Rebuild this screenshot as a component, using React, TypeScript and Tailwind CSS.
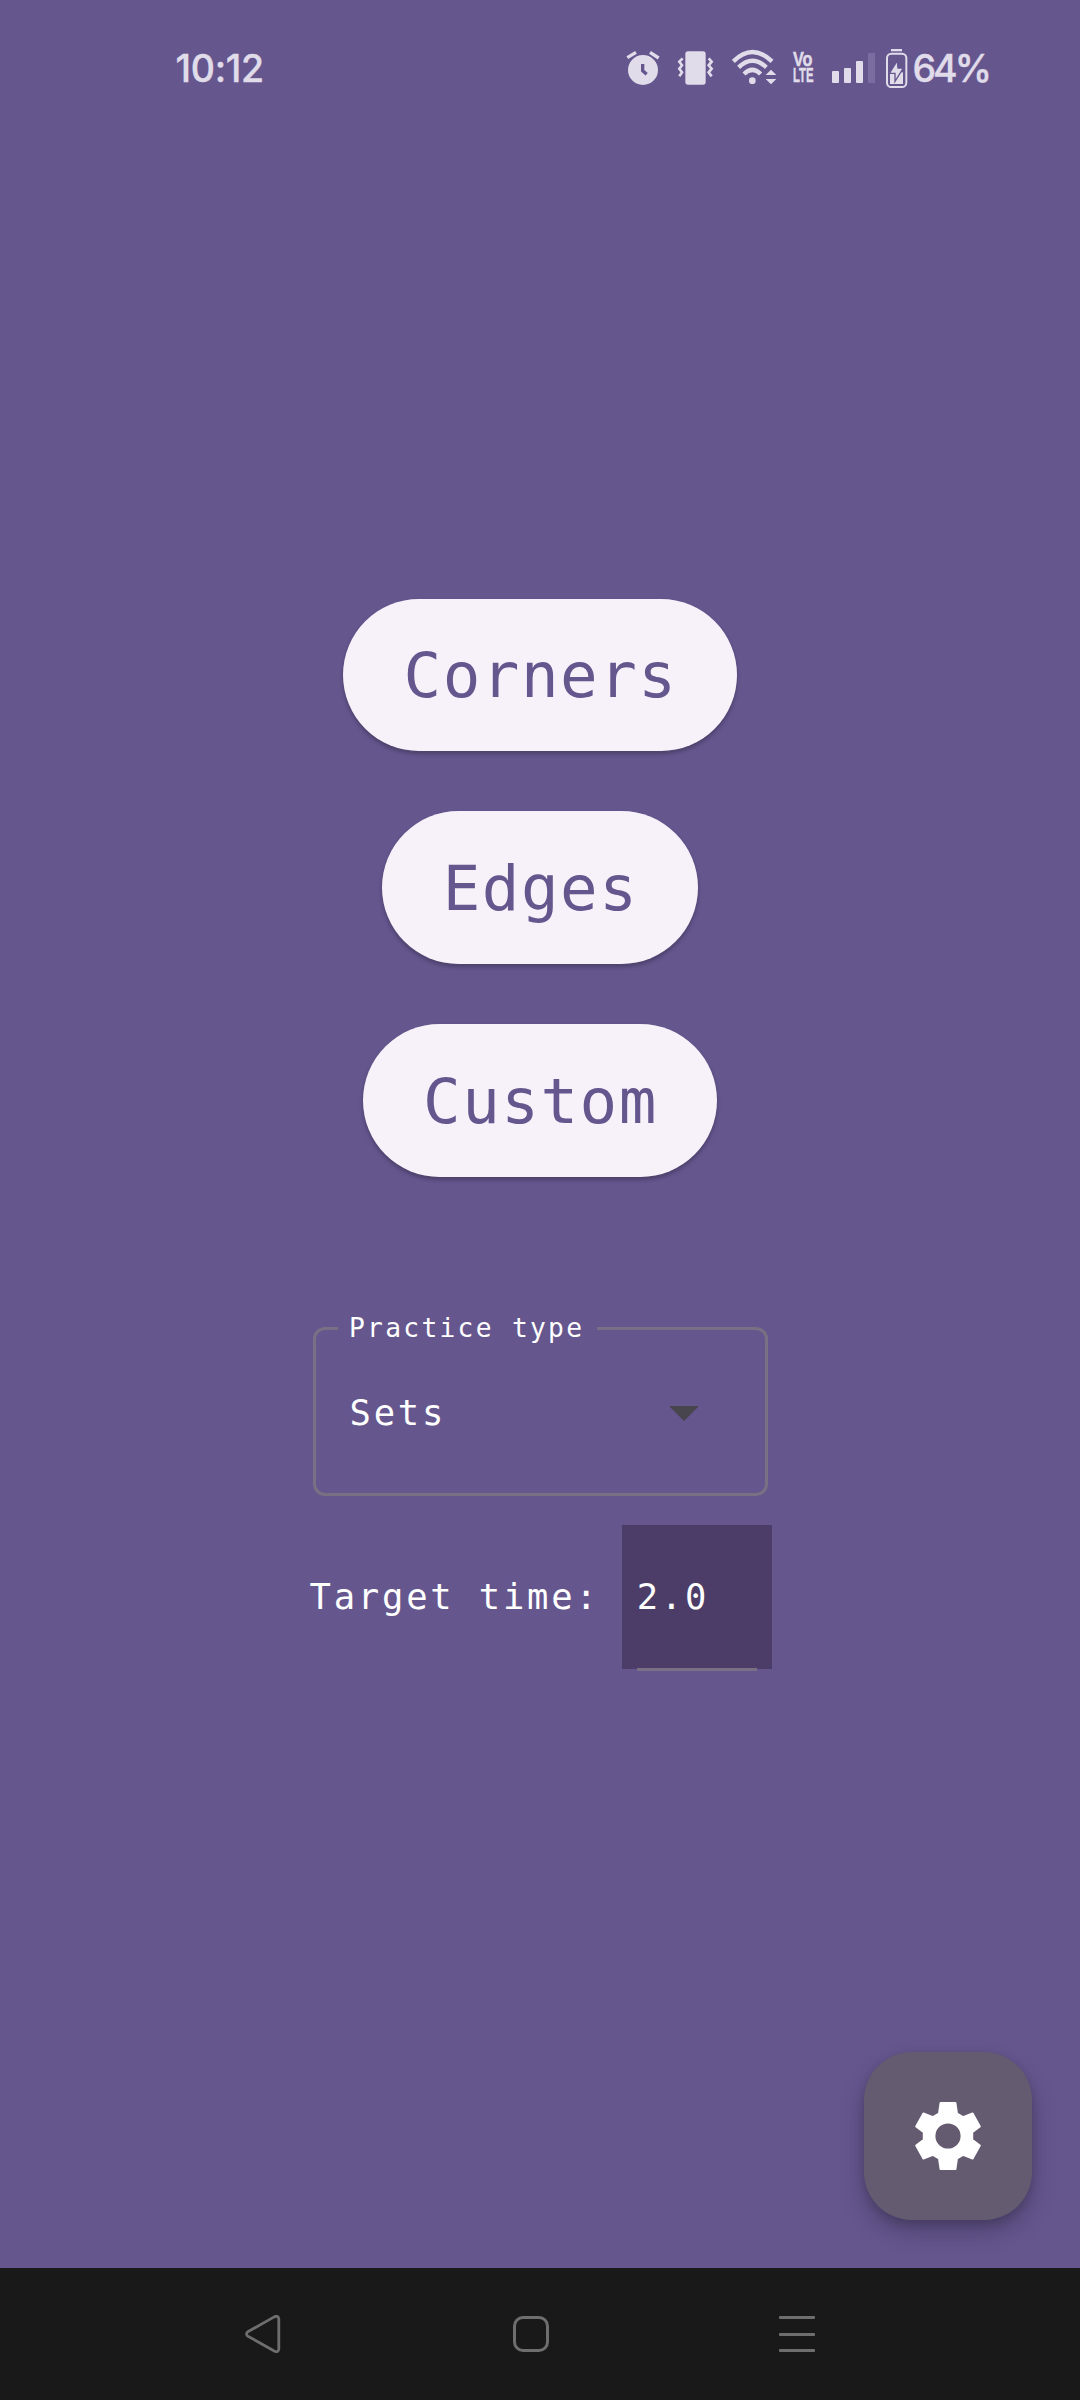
import React from "react";

const INK = "#e0dcea";
const BG = "#65568e";
const MONO = "font-['DejaVu_Sans_Mono','Liberation_Mono',monospace]";

function StatusIcon({ x, w, children }: { x: number; w: number; children: React.ReactNode }) {
  return (
    <svg width={w} height={44} viewBox={`${x} 48 ${w * 3} 132`} fill={INK} className="shrink-0">
      {children}
    </svg>
  );
}

function StatusBar() {
  return (
    <header className="flex h-[136px] items-center pl-[175.5px] font-['Inter',sans-serif] text-[37.5px] font-medium leading-[44px] text-[#e0dcea]">
      <div className="w-[450.5px] pt-[2px] tracking-[-0.3px] [-webkit-text-stroke:0.4px_#e0dcea]">10:12</div>
      <StatusIcon x={48} w={34}>
        <circle cx="99" cy="120" r="45" />
        <path d="M52 83 78 67M120 67l26 17" stroke={INK} strokeWidth="10" />
        <path d="M98 102v20l12 11" fill="none" stroke={BG} strokeWidth="10" />
      </StatusIcon>
      <div className="w-[17px]" />
      <StatusIcon x={201} w={37}>
        <rect x="226" y="64" width="61" height="100" rx="8" />
        <path
          d="M218 85 208 95l8 11-8 10 8 11-8 12M296 85l9 10-9 11 9 10-9 11 9 12"
          fill="none"
          stroke={INK}
          strokeWidth="8"
        />
      </StatusIcon>
      <div className="w-[17px]" />
      <StatusIcon x={363} w={46}>
        <path
          d="M370 94Q427 38 486 94M386 112Q427 72 469 112M402 132Q427 107 452 132"
          fill="none"
          stroke={INK}
          strokeWidth="13"
        />
        <circle cx="427" cy="152" r="10" />
        <path d="M460 136l24-24 22 24z" fill={BG} />
        <path d="M467 135l16-16 16 16zM467 147h32l-16 16z" />
      </StatusIcon>
      <div className="flex h-[44px] w-[54px] flex-col items-start pl-[15.5px] pt-[5px] font-['Liberation_Sans',sans-serif] text-[19.5px] font-bold leading-[16px] [-webkit-text-stroke:0.5px_#e0dcea]">
        <span className="inline-block origin-left scale-x-[0.83]">Vo</span>
        <span className="inline-block origin-left scale-x-[0.58]">LTE</span>
      </div>
      <StatusIcon x={63} w={45}>
        <rect x="66" y="123" width="21" height="36" rx="3" />
        <rect x="102" y="114" width="21" height="45" rx="3" />
        <rect x="138" y="93" width="21" height="66" rx="3" />
        <rect x="174" y="69" width="21" height="90" rx="3" fill="#7b6da0" />
      </StatusIcon>
      <div className="w-[9px]" />
      <StatusIcon x={225} w={23}>
        <rect x="243" y="57" width="33" height="7" />
        <rect x="231" y="71" width="58" height="100" rx="13" fill="none" stroke={INK} strokeWidth="6" />
        <path d="M240 127h39v35h-39z" />
        <path d="M262 92 238 130h17v24l25-40h-16z" stroke={BG} strokeWidth="4" />
      </StatusIcon>
      <div className="ml-[4.5px] pt-[2px] tracking-[-3px] [-webkit-text-stroke:0.4px_#e0dcea]">64%</div>
    </header>
  );
}

function PillButton({ label }: { label: string }) {
  return (
    <button
      className={`flex h-[152.7px] items-center rounded-full bg-[#f7f2fa] pl-[60.5px] pr-[59.5px] pt-[3px] shadow-[0_3px_4px_rgba(0,0,0,0.26)] text-[62.5px] leading-none tracking-[1.5px] text-[#65568e] ${MONO}`}
    >
      {label}
    </button>
  );
}

function NavBar() {
  return (
    <nav className="flex h-[132px] items-center bg-[#191919] pl-[244px]">
      <svg width="38" height="38" viewBox="0 0 38 38" fill="none" stroke="#6e6e6e" strokeWidth="2.8">
        <path d="M3.8 16.8 30.2 1.9Q34.6-.1 34.8 4v30Q34.6 38.1 30.2 36L3.8 21.1Q1.3 19 3.8 16.8Z" />
      </svg>
      <svg width="36" height="36" viewBox="0 0 36 36" fill="none" stroke="#6e6e6e" strokeWidth="3" className="ml-[231px]">
        <rect x="1.5" y="1.5" width="33" height="33" rx="8.5" />
      </svg>
      <div className="ml-[230px] flex h-[36px] w-[36px] flex-col justify-between">
        <i className="block h-[3px] rounded-[1px] bg-[#6e6e6e]" />
        <i className="block h-[3px] rounded-[1px] bg-[#6e6e6e]" />
        <i className="block h-[3px] rounded-[1px] bg-[#6e6e6e]" />
      </div>
    </nav>
  );
}

export default function App() {
  return (
    <div className="flex h-[2400px] w-[1080px] flex-col overflow-hidden bg-[#65568e]">
      <StatusBar />
      <main className={`flex flex-1 flex-col items-center text-white ${MONO}`}>
        <div className="mt-[462.5px] flex flex-col items-center gap-[60.2px]">
          <PillButton label="Corners" />
          <PillButton label="Edges" />
          <PillButton label="Custom" />
        </div>

        <fieldset className="mt-[138px] h-[181px] w-[455px] rounded-[12px] border-[3px] border-[#7a7084]">
          <legend className="ml-[22.5px] h-[28px] w-[259px] whitespace-nowrap pl-[11px] text-[26.3px] leading-[27px] tracking-[2.27px]">
            Practice type
          </legend>
          <div className="flex h-[144px] items-center justify-between pb-[3px] pl-[34px] pr-[66px]">
            <span className="pb-[2px] text-[35.5px] leading-none tracking-[2.8px]">Sets</span>
            <svg width="30" height="15" viewBox="0 0 30 15" fill="#49454f">
              <path d="M0 0h30L15 15z" />
            </svg>
          </div>
        </fieldset>

        <div className="mt-[29px] flex h-[147px] w-[463px] items-start text-[35.5px] leading-none tracking-[2.8px]">
          <label className="flex h-[144px] w-[313.5px] items-center whitespace-nowrap pl-[1px]">Target time:</label>
          <div className="flex h-[144.5px] w-[150px] flex-col bg-[#4b3d67]">
            <span className="flex h-[143px] shrink-0 items-center pl-[15px] pt-[1px]">2.0</span>
            <div className="mx-[15px] h-[3px] shrink-0 bg-[#7a7084]" />
          </div>
        </div>

        <button className="mb-[48px] ml-auto mr-[48px] mt-auto flex h-[168px] w-[168px] items-center justify-center rounded-[48px] bg-[#645b71] shadow-[0_12px_24px_rgba(0,0,0,0.22),0_4px_10px_rgba(0,0,0,0.14)]">
          <svg width="72" height="72" viewBox="-36 -36 72 72">
            <path
              fill="#fff"
              stroke="#fff"
              strokeWidth="2"
              strokeLinejoin="round"
              fillRule="evenodd"
              d="M-7.4-33H7.4L9-22.4 15.1-18.8 24.6-22.5 31.8-9.6 24.2-3.8V3.8L31.8 9.6 24.6 22.5 15.1 18.8 9 22.4 7.4 33H-7.4L-9 22.4-15.1 18.8-24.6 22.5-31.8 9.6-24.2 3.8V-3.8L-31.8-9.6-24.6-22.5-15.1-18.8-9-22.4ZM13.6 0A13.6 13.6 0 1 0-13.6 0 13.6 13.6 0 1 0 13.6 0Z"
            />
          </svg>
        </button>
      </main>
      <NavBar />
    </div>
  );
}
